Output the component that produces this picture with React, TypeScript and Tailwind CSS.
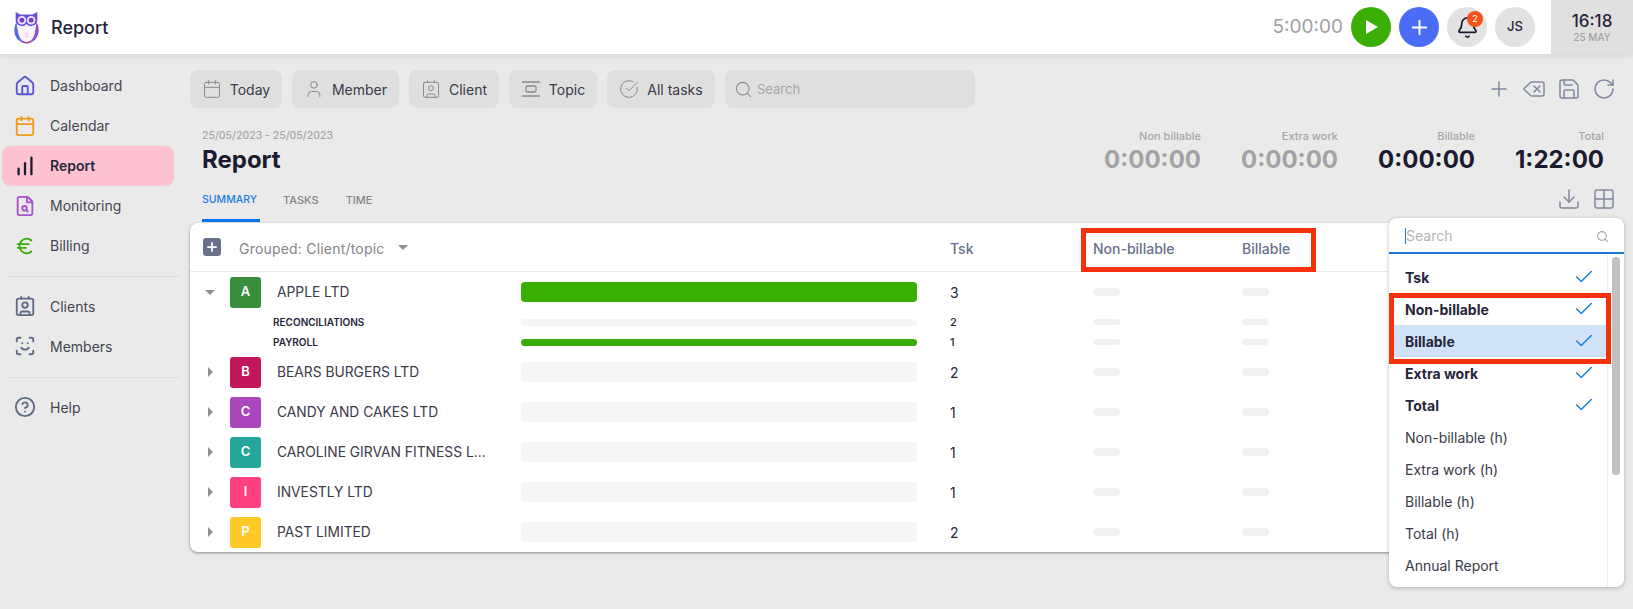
import { Plus, Bell, Delete, Save, RotateCw, Download, Grid2x2, Search, Check, Calendar, User, CircleCheckBig, Home, ChartNoAxesColumnIncreasing, Euro, Contact, ScanFace, CircleHelp, FileSearch } from 'lucide-react'

const nav = [
  { label: 'Dashboard', icon: Home, color: 'text-[#5a55d6]' },
  { label: 'Calendar', icon: Calendar, color: 'text-[#f09a1a]' },
  { label: 'Report', icon: ChartNoAxesColumnIncreasing, color: 'text-[#1b1b2f]', active: true },
  { label: 'Monitoring', icon: FileSearch, color: 'text-[#a94fd0]' },
  { label: 'Billing', icon: Euro, color: 'text-[#3aaa0a]' },
]

const nav2 = [
  { label: 'Clients', icon: Contact, color: 'text-[#5f6b85]' },
  { label: 'Members', icon: ScanFace, color: 'text-[#5f6b85]' },
]

const rows = [
  { letter: 'B', name: 'BEARS BURGERS LTD', color: 'bg-[#c2185b]', tsk: 2 },
  { letter: 'C', name: 'CANDY AND CAKES LTD', color: 'bg-[#ab47bc]', tsk: 1 },
  { letter: 'C', name: 'CAROLINE GIRVAN FITNESS L...', color: 'bg-[#26a69a]', tsk: 1 },
  { letter: 'I', name: 'INVESTLY LTD', color: 'bg-[#ff4081]', tsk: 1 },
  { letter: 'P', name: 'PAST LIMITED', color: 'bg-[#ffca28]', tsk: 2 },
]

const columns = [
  { label: 'Tsk', on: true },
  { label: 'Non-billable', on: true },
  { label: 'Billable', on: true, hover: true },
  { label: 'Extra work', on: true },
  { label: 'Total', on: true },
  { label: 'Non-billable (h)' },
  { label: 'Extra work (h)' },
  { label: 'Billable (h)' },
  { label: 'Total (h)' },
  { label: 'Annual Report' },
]

function Owl() {
  return (
    <svg width="27" height="33" viewBox="0 0 26 32" fill="none">
      <path d="M2.500 12C-0.500 19 1.500 28 10 31C6 25 4 19 3.500 12Z" fill="#4f6be0" />
      <path d="M23.500 12C26.500 19 24.500 28 16 31C20 25 22 19 22.500 12Z" fill="#8a4fd0" />
      <path d="M5 16C8 14 18 14 21 16C22 23 18 30 13 30C8 30 4 23 5 16Z" fill="#fbf5fa" stroke="#e9d5e8" strokeWidth="0.6" />
      <path d="M13 20V26M10.500 22H15.500M10.500 24.500H15.500" stroke="#eec6d6" strokeWidth="0.7" />
      <path d="M9 29.500C12 31.500 14 31.500 17 29.500" stroke="#a13aa8" strokeWidth="1.400" />
      <path d="M2.500 1L7 3.500H19L23.500 1V9C23.500 13 20 14.500 17.500 14.500C15.500 14.500 14 13.500 13 12.500C12 13.500 10.500 14.500 8.500 14.500C6 14.500 2.500 13 2.500 9Z" fill="#6a4fd6" />
      <circle cx="8.500" cy="9" r="4.200" fill="#e9e4fb" />
      <circle cx="17.500" cy="9" r="4.200" fill="#e9e4fb" />
      <circle cx="8.500" cy="9" r="2.400" fill="#7a3fc9" />
      <circle cx="17.500" cy="9" r="2.400" fill="#7a3fc9" />
    </svg>
  )
}

function TopicIcon() {
  return (
    <svg width="20" height="20" viewBox="0 0 20 20" fill="none" stroke="#8b8b8f" strokeWidth="1.300" strokeLinecap="round">
      <path d="M1.500 3H18.500M1.500 17H18.500" />
      <rect x="5" y="7" width="10" height="6" rx="1.500" />
    </svg>
  )
}

function PlayIcon() {
  return (
    <svg width="14" height="16" viewBox="0 0 14 16" className="ml-[2px]">
      <polygon points="1,1 13,8 1,15" fill="white" />
    </svg>
  )
}

function Filter({ label, icon, width }: { label: string; icon: React.ReactNode; width: string }) {
  return (
    <div className={`h-[38px] ${width} rounded-lg bg-[#dfdfe0] flex items-center justify-center gap-[8px] text-[14px] text-[#3a3a48]`}>
      {icon}
      <span>{label}</span>
    </div>
  )
}

function Stat({ label, value, muted, width }: { label: string; value: string; muted?: boolean; width: string }) {
  return (
    <div className={`${width} text-right`}>
      <div className="text-[11px] leading-[14px] font-medium text-[#a6a6a8]">{label}</div>
      <div className={`text-[24px] leading-[32px] font-bold mt-[1px] ${muted ? 'text-[#a3a3a5]' : 'text-[#1b1b2f]'}`}>{value}</div>
    </div>
  )
}

function Row({ children, tsk, height, bar, small }: { children: React.ReactNode; tsk: number; height: string; bar: string; small?: boolean }) {
  return (
    <div className={`flex items-center ${height}`}>
      <div className="w-[331px] flex items-center shrink-0">{children}</div>
      <div className="w-[396px] shrink-0">{bar === 'full' ? <div className="h-[20px] rounded-[4px] bg-[#3bae05]" /> : bar === 'thinfull' ? <div className="h-[7px] rounded-[4px] bg-[#3bae05]" /> : bar === 'thin' ? <div className="h-[7px] rounded-[4px] bg-[#f5f5f5]" /> : <div className="h-[20px] rounded-[4px] bg-[#f6f6f6]" />}</div>
      <div className={`w-[176px] shrink-0 pl-[33px] ${small ? 'text-[11px] font-medium' : 'text-[14px]'} text-[#26263a]`}>{tsk}</div>
      <div className="w-[149px] shrink-0">
        <div className={`w-[27px] rounded-full bg-[#f2f2f2] ${small ? 'h-[6px]' : 'h-[8px]'}`} />
      </div>
      <div className={`w-[27px] rounded-full bg-[#f2f2f2] ${small ? 'h-[6px]' : 'h-[8px]'}`} />
    </div>
  )
}

export default function App() {
  return (
    <div className="relative w-[1633px] h-[609px] overflow-hidden bg-[#eaeaeb] font-['Inter',sans-serif]">
      {/* Header */}
      <header className="h-[54px] bg-white flex items-center justify-between shadow-[0_2px_6px_rgba(0,0,0,0.09)] relative">
        <div className="flex items-center pl-[13px] gap-[11px]">
          <Owl />
          <span className="text-[18px] font-medium text-[#26263a]">Report</span>
        </div>
        <div className="flex items-center h-full">
          <span className="text-[19px] text-[#a0a0a2] mr-[8px]">5:00:00</span>
          <div className="w-10 h-10 rounded-full bg-[#3bae05] flex items-center justify-center mr-2">
            <PlayIcon />
          </div>
          <div className="w-10 h-10 rounded-full bg-[#4a6cf7] flex items-center justify-center mr-2">
            <Plus size={23} className="text-white" />
          </div>
          <div className="relative w-10 h-10 rounded-full bg-[#e2e2e2] flex items-center justify-center mr-2">
            <Bell size={23} strokeWidth={1.800} className="text-[#1b1b2f]" />
            <span className="absolute top-[4px] right-[4px] w-4 h-4 rounded-full bg-[#f4511e] text-white text-[9px] flex items-center justify-center">2</span>
          </div>
          <div className="w-10 h-10 rounded-full bg-[#e2e2e2] flex items-center justify-center text-[13px] font-medium text-[#26263a]">JS</div>
          <div className="w-[82px] h-full ml-[16px] bg-[#e0e0e0] flex flex-col items-center justify-center">
            <span className="text-[17px] leading-[20px] font-medium text-[#26263a]">16:18</span>
            <span className="text-[10px] leading-[13px] font-medium text-[#a0a0a2]">25 MAY</span>
          </div>
        </div>
      </header>

      <div className="flex">
        {/* Sidebar */}
        <aside className="w-[190px] shrink-0 pt-[12px] pl-[2px]">
          {nav.map((n) => (
            <div key={n.label} className={`h-10 w-[172px] rounded-lg flex items-center pl-[12px] gap-[14px] text-[14px] ${n.active ? 'bg-[#ffc2d1] font-semibold text-[#26263a]' : 'text-[#45454f]'}`}>
              <n.icon size={22} strokeWidth={n.active ? 2.500 : 2} className={n.color} />
              <span className="pb-[2px]">{n.label}</span>
            </div>
          ))}
          <div className="h-px bg-[#dedede] w-[172px] ml-[6px] mt-[10px] mb-[9px]" />
          {nav2.map((n) => (
            <div key={n.label} className="h-10 w-[172px] flex items-center pl-[12px] gap-[14px] text-[14px] text-[#45454f]">
              <n.icon size={22} className={n.color} />
              <span>{n.label}</span>
            </div>
          ))}
          <div className="h-px bg-[#dedede] w-[172px] ml-[6px] mt-[11px] mb-[9px]" />
          <div className="h-10 flex items-center pl-[12px] gap-[14px] text-[14px] text-[#45454f]">
            <CircleHelp size={22} className="text-[#5f6b85]" />
            <span>Help</span>
          </div>
        </aside>

        {/* Main */}
        <main className="flex-1 min-w-0 pr-[12px] pt-[16px]">
          <div className="flex items-center justify-between">
            <div className="flex items-center gap-[10px]">
              <Filter label="Today" width="w-[92px]" icon={<Calendar size={20} strokeWidth={1.200} className="text-[#8b8b8f]" />} />
              <Filter label="Member" width="w-[107px]" icon={<User size={20} strokeWidth={1.200} className="text-[#8b8b8f]" />} />
              <Filter label="Client" width="w-[90px]" icon={<Contact size={20} strokeWidth={1.200} className="text-[#8b8b8f]" />} />
              <Filter label="Topic" width="w-[88px]" icon={<TopicIcon />} />
              <Filter label="All tasks" width="w-[108px]" icon={<CircleCheckBig size={20} strokeWidth={1.200} className="text-[#8b8b8f]" />} />
              <div className="h-[38px] w-[250px] rounded-lg bg-[#dfdfe0] flex items-center pl-[9px] gap-[4px] text-[13px] text-[#a6a6a8]">
                <Search size={19} strokeWidth={1.300} className="text-[#8b8b8f]" />
                <span className="pt-[2px]">Search</span>
              </div>
            </div>
            <div className="flex items-center gap-[11px] pr-[5px] text-[#8189a0]">
              <Plus size={24} strokeWidth={1.500} />
              <Delete size={24} strokeWidth={1.500} />
              <Save size={24} strokeWidth={1.500} />
              <RotateCw size={24} strokeWidth={1.500} />
            </div>
          </div>

          <div className="flex justify-between items-start mt-[21px] pl-[12px]">
            <div>
              <div className="text-[10.500px] leading-[14px] font-medium text-[#a6a6a8]">25/05/2023 - 25/05/2023</div>
              <div className="text-[24px] leading-[32px] font-bold text-[#1b1b2f] mt-[1px]">Report</div>
            </div>
            <div className="flex pr-[17px]">
              <Stat label="Non billable" value="0:00:00" muted width="w-[100px]" />
              <Stat label="Extra work" value="0:00:00" muted width="w-[137px]" />
              <Stat label="Billable" value="0:00:00" width="w-[137px]" />
              <Stat label="Total" value="1:22:00" width="w-[129px]" />
            </div>
          </div>

          <div className="flex items-end justify-between mt-[8px] pl-[12px] h-[38px]">
            <div className="flex text-[11px] font-medium text-[#85858a] leading-none">
              <div className="relative pb-[16px] text-[10.500px] text-[#1a7fe0] w-[58px]">
                SUMMARY
                <div className="absolute left-0 bottom-0 w-[58px] h-[3px] bg-[#0a74ea]" />
              </div>
              <div className="pb-[16px] ml-[23px]">TASKS</div>
              <div className="pb-[16px] ml-[27px]">TIME</div>
            </div>
            <div className="flex items-center gap-[11px] pr-[5px] pb-[11px] text-[#8189a0]">
              <Download size={24} strokeWidth={1.500} />
              <Grid2x2 size={24} strokeWidth={1.500} />
            </div>
          </div>

          {/* Table card */}
          <div className="h-[329px] bg-white rounded-lg shadow-[0_1px_3px_rgba(0,0,0,0.4)] overflow-hidden mt-[1px]">
            <div className="h-[49px] flex items-center border-b border-[#ececec]">
              <div className="w-[331px] shrink-0 flex items-center pl-[13px]">
                <div className="w-[18px] h-[18px] rounded-[3px] bg-[#68718a] flex items-center justify-center">
                  <Plus size={14} strokeWidth={3} className="text-white" />
                </div>
                <span className="ml-[18px] pt-[2px] text-[14px] tracking-[0.2px] text-[#85858a]">Grouped: Client/topic</span>
                <span className="ml-[13px] border-x-[5px] border-x-transparent border-t-[5px] border-t-[#8f8f93]" />
              </div>
              <div className="w-[396px] shrink-0" />
              <div className="w-[176px] shrink-0 pl-[33px] pt-[2px] text-[14px] font-medium text-[#68718a]">Tsk</div>
              <div className="w-[149px] shrink-0 pt-[2px] text-[14px] font-medium text-[#68718a]">Non-billable</div>
              <div className="pt-[2px] text-[14px] font-medium text-[#68718a]">Billable</div>
            </div>

            <Row tsk={3} height="h-[40px]" bar="full">
              <span className="w-[40px] flex justify-center shrink-0">
                <span className="border-x-[5px] border-x-transparent border-t-[5px] border-t-[#8f8f93]" />
              </span>
              <span className="w-[31px] h-[31px] rounded-[3px] bg-[#388e3c] text-white text-[13px] font-semibold flex items-center justify-center shrink-0">A</span>
              <span className="ml-[16px] text-[13.800px] text-[#3a3a48]">APPLE LTD</span>
            </Row>
            <Row tsk={2} height="h-[20px]" bar="thin" small>
              <span className="ml-[83px] text-[10px] font-semibold text-[#26263a]">RECONCILIATIONS</span>
            </Row>
            <Row tsk={1} height="h-[20px]" bar="thinfull" small>
              <span className="ml-[83px] text-[10px] font-semibold text-[#26263a]">PAYROLL</span>
            </Row>
            {rows.map((r) => (
              <Row key={r.name} tsk={r.tsk} height="h-[40px]" bar="empty">
                <span className="w-[40px] flex justify-center shrink-0">
                  <span className="border-y-[5px] border-y-transparent border-l-[5px] border-l-[#8f8f93]" />
                </span>
                <span className={`w-[31px] h-[31px] rounded-[3px] ${r.color} text-white text-[13px] font-semibold flex items-center justify-center shrink-0`}>{r.letter}</span>
                <span className="ml-[16px] text-[13.800px] text-[#3a3a48] whitespace-nowrap">{r.name}</span>
              </Row>
            ))}
          </div>
        </main>
      </div>

      {/* Column picker dropdown */}
      <div className="absolute left-[1389px] top-[218px] w-[235px] h-[369px] bg-white rounded-lg shadow-[0_1px_4px_rgba(0,0,0,0.25)] overflow-hidden">
        <div className="h-[36px] border-b-2 border-[#1976d2] flex items-center justify-between pl-[16px] pr-[15px] pt-[2px] text-[14px] text-[#b4b4b6]">
          <span className="border-l border-[#1976d2] leading-[16px]">Search</span>
          <Search size={13} className="text-[#a0a0a2]" />
        </div>
        <div className="flex h-[333px]">
          <div className="w-[219px] border-r border-[#f0f0f0] pt-[7px]">
            {columns.map((c) => (
              <div key={c.label} className={`h-[32px] flex items-center justify-between pl-[16px] pr-[12px] text-[14px] ${c.on ? 'font-bold text-[#26263a]' : 'text-[#3a3a48]'} ${c.hover ? 'bg-[#cfe2f8]' : ''}`}>
                <span>{c.label}</span>
                {c.on && <Check size={22} strokeWidth={1.600} className="text-[#1a7fe0]" />}
              </div>
            ))}
          </div>
          <div className="flex-1 pt-[3px] pl-[4px]">
            <div className="w-[8px] h-[218px] rounded-full bg-[#c1c1c1]" />
          </div>
        </div>
      </div>

      {/* Red annotation boxes */}
      <div className="absolute left-[1081px] top-[228px] w-[235px] h-[44px] border-[5px] border-[#f5300c]" />
      <div className="absolute left-[1389px] top-[293px] w-[222px] h-[71px] border-[5px] border-[#f5300c]" />
    </div>
  )
}
